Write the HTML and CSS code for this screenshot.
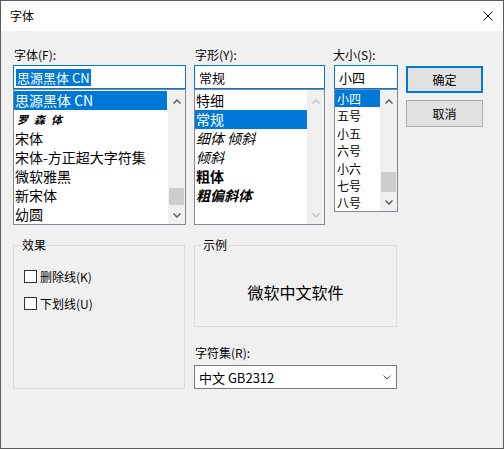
FILE: index.html
```html
<!DOCTYPE html>
<html lang="zh-CN">
<head>
<meta charset="utf-8">
<title>字体</title>
<link rel="stylesheet" href="styles.css">
</head>
<body>
<div class="window">
  <div class="titlebar">
    <span class="title">字体</span>
    <svg class="close" width="10" height="10" viewBox="0 0 10 10">
      <path d="M0.5 0.5 L9.5 9.5 M9.5 0.5 L0.5 9.5" stroke="#000" stroke-width="1" fill="none"/>
    </svg>
  </div>

  <div class="content">
    <div class="top">
      <div class="col col-font">
        <div class="label">字体(F):</div>
        <div class="edit"><span class="sel-text">思源黑体 CN</span></div>
        <div class="list list-font">
          <div class="items">
            <div class="item selected">思源黑体 CN</div>
            <div class="item item-script">罗森体</div>
            <div class="item">宋体</div>
            <div class="item">宋体-方正超大字符集</div>
            <div class="item">微软雅黑</div>
            <div class="item">新宋体</div>
            <div class="item">幼圆</div>
          </div>
          <div class="scrollbar">
            <div class="arrow arrow-up"><svg width="8" height="5" viewBox="0 0 8 5"><path d="M0.5 4.5 L4 1 L7.5 4.5" fill="none" stroke="#606060" stroke-width="1.5"/></svg></div>
            <div class="track"><div class="thumb thumb-font"></div></div>
            <div class="arrow arrow-down"><svg width="8" height="5" viewBox="0 0 8 5"><path d="M0.5 0.5 L4 4 L7.5 0.5" fill="none" stroke="#606060" stroke-width="1.5"/></svg></div>
          </div>
        </div>
      </div>

      <div class="col col-style">
        <div class="label">字形(Y):</div>
        <div class="edit"><span class="edit-text">常规</span></div>
        <div class="list list-style">
          <div class="items">
            <div class="item">特细</div>
            <div class="item selected">常规</div>
            <div class="item italic">细体 倾斜</div>
            <div class="item italic">倾斜</div>
            <div class="item bold">粗体</div>
            <div class="item bold italic">粗偏斜体</div>
          </div>
          <div class="scrollbar">
            <div class="arrow arrow-up"><svg width="8" height="5" viewBox="0 0 8 5"><path d="M0.5 4.5 L4 1 L7.5 4.5" fill="none" stroke="#c4c4c4" stroke-width="1.5"/></svg></div>
            <div class="track"></div>
            <div class="arrow arrow-down"><svg width="8" height="5" viewBox="0 0 8 5"><path d="M0.5 0.5 L4 4 L7.5 0.5" fill="none" stroke="#c4c4c4" stroke-width="1.5"/></svg></div>
          </div>
        </div>
      </div>

      <div class="col col-size">
        <div class="label label-size">大小(S):</div>
        <div class="edit"><span class="edit-text">小四</span></div>
        <div class="list list-size">
          <div class="items">
            <div class="item selected">小四</div>
            <div class="item">五号</div>
            <div class="item">小五</div>
            <div class="item">六号</div>
            <div class="item">小六</div>
            <div class="item">七号</div>
            <div class="item">八号</div>
          </div>
          <div class="scrollbar">
            <div class="arrow arrow-up"><svg width="8" height="5" viewBox="0 0 8 5"><path d="M0.5 4.5 L4 1 L7.5 4.5" fill="none" stroke="#606060" stroke-width="1.5"/></svg></div>
            <div class="track"><div class="thumb thumb-size"></div></div>
            <div class="arrow arrow-down"><svg width="8" height="5" viewBox="0 0 8 5"><path d="M0.5 0.5 L4 4 L7.5 0.5" fill="none" stroke="#606060" stroke-width="1.5"/></svg></div>
          </div>
        </div>
      </div>

      <div class="buttons">
        <button class="btn btn-default">确定</button>
        <button class="btn">取消</button>
      </div>
    </div>

    <div class="bottom">
      <div class="group group-effects">
        <span class="legend">效果</span>
        <label class="check"><span class="box"></span><span>删除线(K)</span></label>
        <label class="check"><span class="box"></span><span>下划线(U)</span></label>
      </div>

      <div class="right">
        <div class="group group-sample">
          <span class="legend">示例</span>
          <span class="sample-text">微软中文软件</span>
        </div>
        <div class="label label-charset">字符集(R):</div>
        <div class="combo">
          <span class="combo-text">中文 GB2312</span>
          <svg width="8" height="5" viewBox="0 0 8 5"><path d="M0.5 0.5 L4 4 L7.5 0.5" fill="none" stroke="#5a5a5a" stroke-width="1"/></svg>
        </div>
      </div>
    </div>
  </div>
</div>
</body>
</html>
```

FILE: styles.css
```css
* {
  box-sizing: border-box;
}

html, body {
  margin: 0;
  padding: 0;
  background: #f0f0f0;
}

body {
  font-family: "Noto Sans CJK SC", "Noto Sans", sans-serif;
  font-size: 12px;
  color: #000;
}

.window {
  width: 504px;
  height: 449px;
  border: 1px solid #5c5c5c;
  background: #f0f0f0;
  display: flex;
  flex-direction: column;
}

/* title bar */
.titlebar {
  height: 30px;
  background: #fff;
  display: flex;
  align-items: center;
  justify-content: space-between;
  padding: 0 10px 0 9px;
  flex: none;
}

.title {
  font-size: 12px;
  line-height: 16px;
}

.close {
  display: block;
}

/* dialog body */
.content {
  padding: 15px 0 0 12px;
}

.top {
  display: flex;
  align-items: flex-start;
}

.col {
  display: flex;
  flex-direction: column;
}

.col-font { width: 173px; }
.col-style { width: 131px; margin-left: 8px; }
.col-size { width: 64px; margin-left: 9px; }

.label {
  font-size: 12px;
  line-height: 17px;
  height: 17px;
  margin-bottom: 2px;
  padding-left: 1px;
  white-space: nowrap;
}

.label-size {
  margin-left: -2px;
}

.edit {
  height: 24px;
  border: 1px solid #0078d7;
  background: #fff;
  display: flex;
  align-items: center;
  padding: 0 2px;
  font-size: 13px;
}

.sel-text {
  background: #0078d7;
  color: #fff;
  line-height: 17px;
  padding: 0 1px;
}

.edit-text {
  line-height: 17px;
  padding-left: 2px;
}

/* list boxes */
.list {
  border: 1px solid #828790;
  background: #fff;
  display: flex;
  overflow: hidden;
}

.list-font { height: 136px; }
.list-style { height: 136px; }
.list-size { height: 123px; }

.items {
  flex: 1;
  min-width: 0;
  padding-top: 1px;
}

.list-font .items {
  margin-right: 1px;
}

.item {
  height: 19px;
  line-height: 19px;
  font-size: 14px;
  padding-left: 1px;
  white-space: nowrap;
  overflow: hidden;
}

.list-size .items {
  padding-top: 0;
}

.list-size .item {
  height: 17.4px;
  line-height: 17.4px;
  font-size: 12px;
  padding-left: 2px;
}

.item.selected {
  background: #0078d7;
  color: #fff;
}

.item-script {
  font-size: 11px;
  letter-spacing: 6px;
  font-style: italic;
  font-weight: bold;
  padding-left: 3px;
}

.italic { font-style: italic; }
.bold { font-weight: bold; }

/* scroll bars */
.scrollbar {
  width: 17px;
  flex: none;
  background: #f0f0f0;
  display: flex;
  flex-direction: column;
}

.arrow {
  display: flex;
  align-items: center;
  justify-content: center;
  flex: none;
}

.arrow svg { display: block; }

.arrow-up { height: 20px; padding-top: 2px; }
.arrow-down { height: 18px; }

.track {
  flex: 1;
  display: flex;
  flex-direction: column;
  justify-content: flex-end;
}

.thumb {
  background: #cdcdcd;
  margin: 0 1px 1px 1px;
}

.thumb-font { height: 17px; }
.thumb-size { height: 20px; }

/* push buttons */
.buttons {
  margin-left: 8px;
  padding-top: 20px;
  display: flex;
  flex-direction: column;
  gap: 7px;
}

.btn {
  width: 77px;
  height: 27px;
  background: #e1e1e1;
  border: 1px solid #adadad;
  font-family: inherit;
  font-size: 12px;
  color: #000;
  padding: 0;
  margin: 0;
}

.btn-default {
  border: 2px solid #0078d7;
}

/* lower half */
.bottom {
  display: flex;
  margin-top: 20px;
  align-items: flex-start;
}

.group {
  position: relative;
  border: 1px solid #dcdcdc;
}

.legend {
  position: absolute;
  top: -9px;
  left: 7px;
  padding: 0 1px;
  background: #f0f0f0;
  line-height: 16px;
  font-size: 12px;
}

.group-effects {
  width: 172px;
  height: 144px;
  padding: 21px 0 0 10px;
  display: flex;
  flex-direction: column;
  gap: 8px;
}

.check {
  display: flex;
  align-items: center;
  height: 19px;
  gap: 3px;
}

.box {
  width: 13px;
  height: 13px;
  border: 1px solid #333;
  background: #fff;
  flex: none;
}

.right {
  width: 203px;
  margin-left: 9px;
  display: flex;
  flex-direction: column;
}

.group-sample {
  height: 82px;
  display: flex;
  align-items: center;
  justify-content: center;
  padding-top: 11px;
}

.sample-text {
  font-size: 16px;
  line-height: 20px;
}

.label-charset {
  margin-top: 17px;
  margin-bottom: 4px;
}

.combo {
  height: 24px;
  border: 1px solid #7a7a7a;
  background: #fff;
  display: flex;
  align-items: center;
  justify-content: space-between;
  padding: 0 5px 0 4px;
  font-size: 13px;
}

.combo svg { display: block; }
```
